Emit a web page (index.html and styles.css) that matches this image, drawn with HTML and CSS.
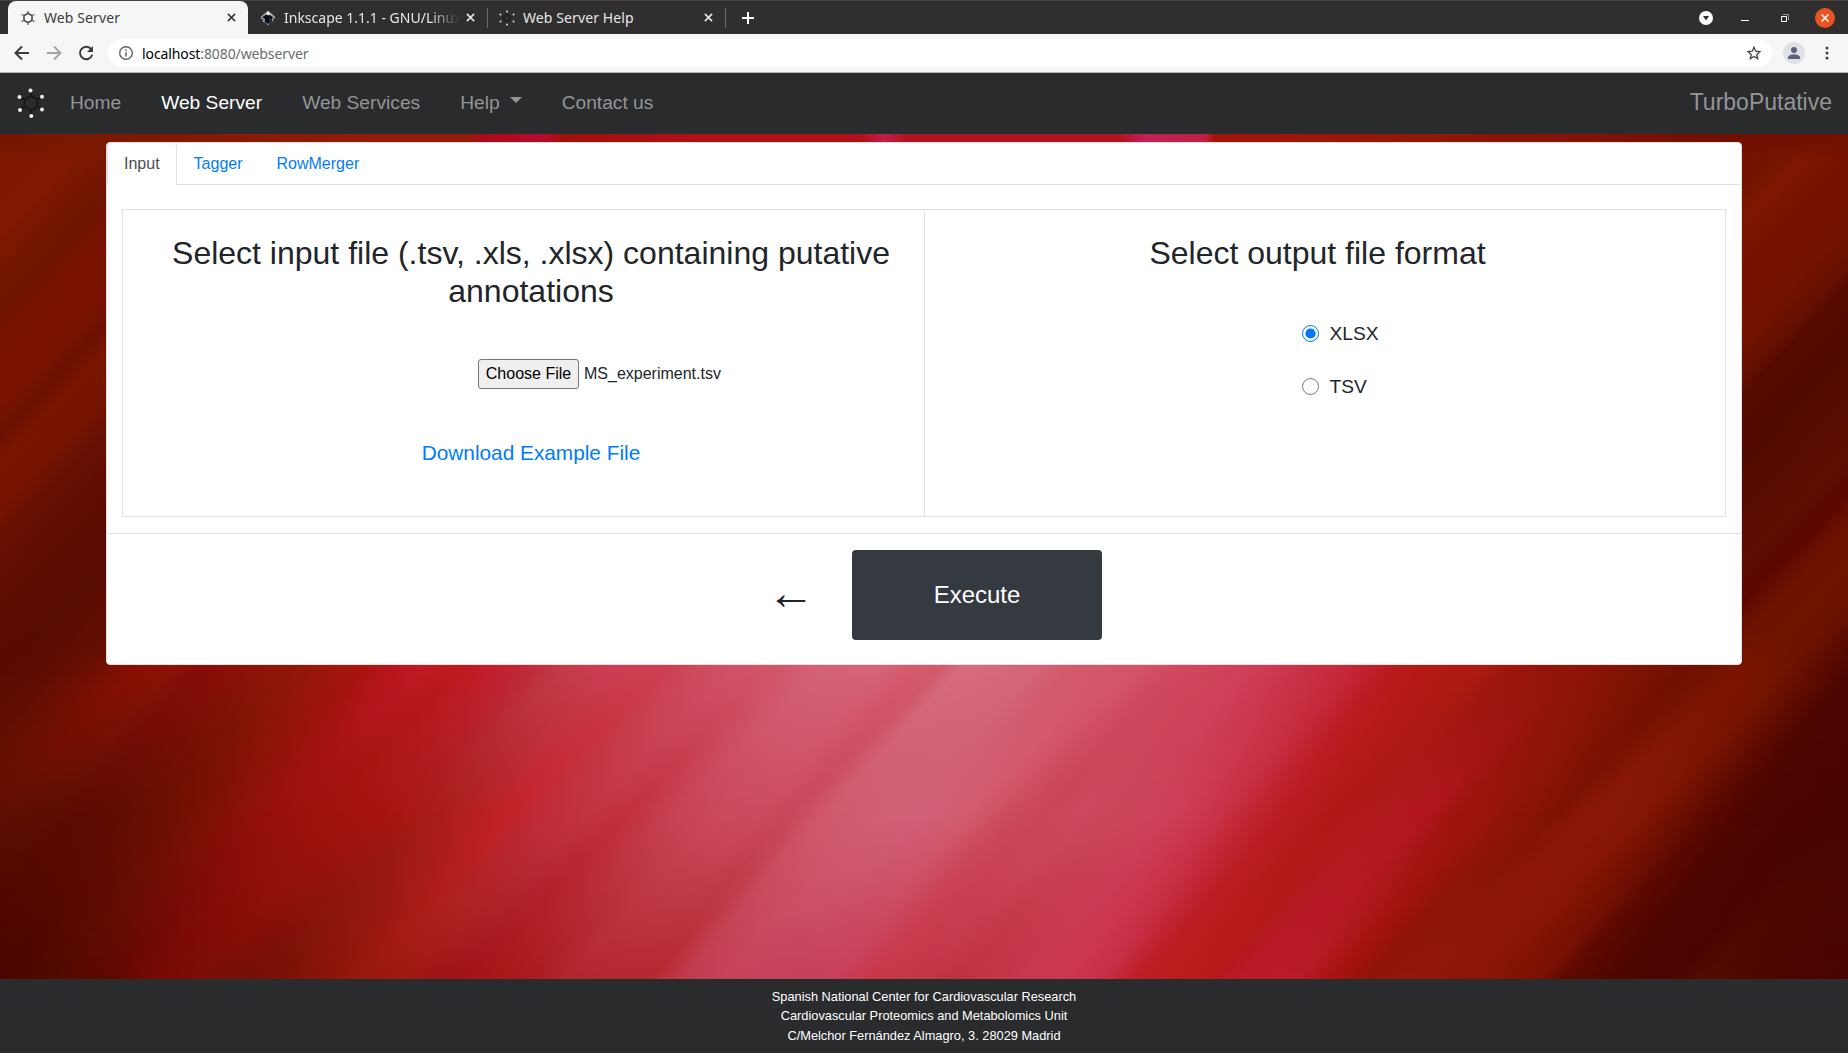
FILE: index.html
```html
<!DOCTYPE html>
<html lang="en">
<head>
<meta charset="utf-8">
<title>Web Server</title>
<link rel="stylesheet" href="styles.css">
</head>
<body>
<svg class="defs" width="0" height="0" aria-hidden="true">
  <symbol id="close" viewBox="0 0 10 10"><path d="M1 1l8 8M9 1l-8 8" fill="none" stroke="currentColor" stroke-width="1.8"/></symbol>
</svg>

<header class="tabstrip">
  <div class="tab tab-active">
    <svg class="favicon" viewBox="0 0 16 16"><path d="M8 3.3l4 2.3v4.8l-4 2.3-4-2.3V5.600z" fill="none" stroke="#3c3c3c" stroke-width="1.5"/><path d="M8 1v2.500M8 12.500V15M1.500 4.300l2.500 1.400M12 10.300l2.500 1.400M14.500 4.300L12 5.700M4 10.300l-2.500 1.400" stroke="#666" stroke-width="1.300"/></svg>
    <span class="tab-title">Web Server</span>
    <svg class="tab-close"><use href="#close"/></svg>
  </div>
  <div class="tab">
    <svg class="favicon" viewBox="0 0 16 16"><path d="M8 .5l7 6.300c1 1.200-.7 2-2.400 2.600l.9 1.600-3.300 1.500L8 15.500l-2-2.700-3.500-1 1.200-2C1.500 9.200.2 8 1 6.800z" fill="#a9adb4"/><path d="M8 4l5.500 3.500-2 1.500.8 2L8 14l-3.500-2.500.5-2.500-3-1.500L6 4.500z" fill="#0c0e18"/><path d="M8 1.500l2.300 2.300L8 5.500 6 4z" fill="#eee"/><path d="M9 8l2.500 2-2 1.500z" fill="#39466b"/></svg>
    <span class="tab-title tab-fade">Inkscape 1.1.1 - GNU/Linux</span>
    <svg class="tab-close"><use href="#close"/></svg>
  </div>
  <div class="tab tab-help">
    <svg class="favicon" viewBox="0 0 16 16"><path d="M8 4.500l3 1.800v3.500l-3 1.800-3-1.800V6.300z" fill="none" stroke="#181a1a" stroke-width="1.200"/><g fill="#ddd"><circle cx="8" cy="1.500" r="1"/><circle cx="8" cy="14.500" r="1"/><circle cx="1.500" cy="4.500" r="1"/><circle cx="14.500" cy="4.500" r="1"/><circle cx="1.500" cy="11.500" r="1"/><circle cx="14.500" cy="11.500" r="1"/></g></svg>
    <span class="tab-title">Web Server Help</span>
    <svg class="tab-close"><use href="#close"/></svg>
  </div>
  <svg class="new-tab" viewBox="0 0 12 12"><path d="M6 0v12M0 6h12" stroke="#fff" stroke-width="2"/></svg>
  <div class="window-controls">
    <svg width="14" height="14" viewBox="0 0 14 14"><circle cx="7" cy="7" r="7" fill="#fff"/><path d="M4 5h6L7 9.500z" fill="#302e2f"/></svg>
    <svg width="8" height="14" viewBox="0 0 8 14"><path d="M0 9.500h8" stroke="#fff"/></svg>
    <svg width="8" height="8" viewBox="0 0 8 8"><path d="M.5 2.500h5v5h-5z" fill="none" stroke="#fff"/><path d="M2 .5h5.500V6" fill="none" stroke="#999"/></svg>
    <svg width="20" height="20" viewBox="0 0 20 20"><circle cx="10" cy="10" r="10" fill="#e95420"/><path d="M6.500 6.500l7 7M13.500 6.500l-7 7" stroke="#fff" stroke-width="1.500"/></svg>
  </div>
</header>

<div class="toolbar">
  <svg class="tool" viewBox="0 0 16 16"><path d="M15 8H2M8 1.500L1.500 8 8 14.500" fill="none" stroke="#3b3b3b" stroke-width="2"/></svg>
  <svg class="tool" viewBox="0 0 16 16"><path d="M1 8h13M8 1.500L14.500 8 8 14.500" fill="none" stroke="#a3a3a3" stroke-width="1.800"/></svg>
  <svg class="tool" viewBox="0 0 16 16"><path d="M13.200 4.200A6.200 6.200 0 1 0 14.200 9.800" fill="none" stroke="#3b3b3b" stroke-width="2"/><path d="M15 1v6H9z" fill="#3b3b3b"/></svg>
  <div class="omnibox">
    <svg width="14" height="14" viewBox="0 0 14 14"><circle cx="7" cy="7" r="6.300" fill="none" stroke="#5f6368" stroke-width="1.400"/><path d="M7 6.200v4.300M7 3.500v1.500" stroke="#5f6368" stroke-width="1.500"/></svg>
    <span class="url"><b>localhost</b>:8080/webserver</span>
    <svg class="star" width="14" height="14" viewBox="0 0 14 14"><path d="M7 1.300l1.700 3.900 4.300.4-3.200 2.800.9 4.200L7 10.400l-3.700 2.200.9-4.200L1 5.600l4.300-.4z" fill="none" stroke="#444" stroke-width="1.300"/></svg>
  </div>
  <svg class="avatar" viewBox="0 0 22 22"><circle cx="11" cy="11" r="11" fill="#dee1e6"/><circle cx="11" cy="8" r="3" fill="#5a6478"/><path d="M5 17v-1.500c0-2.400 4-3.300 6-3.300s6 .9 6 3.300V17z" fill="#5a6478"/></svg>
  <svg class="kebab" viewBox="0 0 4 14"><g fill="#444"><circle cx="2" cy="2" r="1.500"/><circle cx="2" cy="7" r="1.500"/><circle cx="2" cy="12" r="1.500"/></g></svg>
</div>

<nav class="navbar">
  <svg class="brand-mark" viewBox="0 0 28 30"><path d="M14 8l6.500 3.500v7L14 22.500l-6.500-4v-7zM14 8V3M20.500 11.500l4-2.500M20.500 18.500l4 2.500M14 22.500V27M7.500 18.500L3 21M7.500 11.500L3 9" fill="none" stroke="#151616" stroke-width="1.600"/><g fill="#eee"><circle cx="13.500" cy="2.500" r="2"/><circle cx="2.500" cy="9" r="2"/><circle cx="25" cy="8.700" r="2"/><circle cx="3" cy="22" r="2"/><circle cx="25" cy="21.500" r="2"/><circle cx="14.300" cy="28" r="2"/></g></svg>
  <a>Home</a>
  <a class="current">Web Server</a>
  <a>Web Services</a>
  <a class="dropdown">Help</a>
  <a>Contact us</a>
  <span class="brand">TurboPutative</span>
</nav>

<main class="page">
  <div class="backdrop" aria-hidden="true">
    <div class="streaks streaks-mid"></div>
    <div class="streaks streaks-upper"></div>
    <div class="streaks streaks-lower"></div>
    <div class="edge edge-left"><div class="streaks streaks-left"></div></div>
    <div class="edge edge-right"><div class="streaks streaks-right"></div></div>
    <div class="top-glow"></div>
  </div>
  <section class="card">
    <div class="card-tabs">
      <a class="selected">Input</a>
      <a>Tagger</a>
      <a>RowMerger</a>
    </div>
    <div class="options">
      <div class="option">
        <h2>Select input file (.tsv, .xls, .xlsx) containing putative annotations</h2>
        <div class="file-row"><button class="choose">Choose File</button><span>MS_experiment.tsv</span></div>
        <a class="example">Download Example File</a>
      </div>
      <div class="option">
        <h2>Select output file format</h2>
        <div class="formats">
          <label><input type="radio" name="format" checked>XLSX</label>
          <label><input type="radio" name="format">TSV</label>
        </div>
      </div>
    </div>
    <div class="actions">
      <span class="back">←</span>
      <button class="execute">Execute</button>
    </div>
  </section>
</main>

<footer class="footer">
  <div>Spanish National Center for Cardiovascular Research</div>
  <div>Cardiovascular Proteomics and Metabolomics Unit</div>
  <div>C/Melchor Fernández Almagro, 3. 28029 Madrid</div>
</footer>
</body>
</html>
```
FILE: styles.css
```css
* { box-sizing: border-box; }

body {
  margin: 0;
  height: 1053px;
  overflow: hidden;
  display: flex;
  flex-direction: column;
  font-family: "Liberation Sans", Arial, sans-serif;
  font-size: 16px;
  line-height: 1.5;
  color: #212529;
}

svg { display: block; flex: none; }
.defs { position: absolute; }

/* Browser tabs */
.tabstrip {
  height: 34px;
  flex: none;
  display: flex;
  align-items: center;
  padding-left: 8px;
  background: #302e2f;
  border-top: 1px solid #454344;
  font-family: "Noto Sans", sans-serif;
  font-size: 14px;
  color: #e6e6e6;
}
.tab {
  width: 239px;
  height: 33px;
  display: flex;
  align-items: center;
  padding: 0 12px 0 12px;
}
.tab-active {
  width: 240px;
  background: #f6f6f6;
  color: #3c3c3c;
  border-radius: 8px 8px 0 0;
}
.favicon { width: 16px; height: 16px; margin-right: 8px; }
.tab-title { width: 176px; white-space: nowrap; overflow: hidden; letter-spacing: .1px; }
.tab-fade { letter-spacing: 0; mask-image: linear-gradient(90deg, #000 145px, transparent 176px); }
.tab-close { width: 9px; height: 9px; margin-left: 8px; }
.tab-help {
  border-right: 1px solid #6b696a;
  border-left: 1px solid #6b696a;
  height: 20px;
  padding-left: 11px;
}
.new-tab { width: 12px; height: 12px; margin-left: 16px; }
.window-controls {
  margin-left: auto;
  display: flex;
  align-items: center;
  padding-right: 13px;
}
.window-controls svg:nth-child(2) { margin-left: 28px; }
.window-controls svg:nth-child(3) { margin-left: 32px; }
.window-controls svg:nth-child(4) { margin-left: 26px; }

/* Address bar */
.toolbar {
  height: 39px;
  flex: none;
  display: flex;
  align-items: center;
  padding: 0 19px 0 14px;
  background: #f6f6f6;
  border-bottom: 1px solid #b4b4b4;
}
.tool { width: 16px; height: 16px; margin-right: 16px; }
.omnibox {
  flex: 1;
  height: 28px;
  margin: 0 11px 0 -2px;
  padding: 0 11px;
  display: flex;
  align-items: center;
  gap: 9px;
  border-radius: 14px;
  background: #fff;
  font-family: "Noto Sans", sans-serif;
  font-size: 14px;
  color: #6a6d70;
}
.url { letter-spacing: -.1px; }
.url b { font-weight: 400; color: #000; }
.star { margin-left: auto; }
.avatar { width: 22px; height: 22px; }
.kebab { width: 4px; height: 14px; margin-left: 20px; }

/* Site navigation */
.navbar {
  height: 61px;
  flex: none;
  display: flex;
  align-items: center;
  gap: 40px;
  padding: 0 16px;
  background: #2a2b2d;
  font-size: 19.2px;
  color: #949596;
}
.brand-mark { width: 28px; height: 30px; margin: 0 -15px 2px 1px; }
.current { color: #fff; }
.dropdown::after {
  content: "";
  display: inline-block;
  margin-left: 10px;
  vertical-align: 6px;
  border: 6px solid transparent;
  border-top-color: currentColor;
  border-bottom: 0;
}
.brand { margin-left: auto; padding-bottom: 2px; font-size: 23px; }

/* Page with diagonal light streaks behind the card */
.page {
  position: relative;
  height: 845px;
  flex: none;
  padding: 8px 106px;
  overflow: hidden;
}
.backdrop { position: absolute; inset: 0; background: #5a0b00; overflow: hidden; }
.streaks {
  position: absolute;
  top: 0;
  left: 0;
  width: 2300px;
  height: 845px;
  transform: skewX(-43.380deg);
  transform-origin: 0 531px;
}
.streaks-upper {
  mask-image: linear-gradient(#000 531px, transparent 681px);
  background: linear-gradient(90deg, #580b00 0, #600e00 59px, #741002 100px, #8a1004 141px, #8a1407 177px, #860e08 200px, #8c1008 236px, #8f1809 295px, #9d170c 330px, #aa1410 365px, #b5151a 389px, #bf1a25 424px, #bc1a1e 460px, #c3212f 500px, #c02c3c 536px, #c43c4c 566px, #cb4055 619px, #cc3f52 666px, #cd4a5c 695px, #d1526a 737px, #d1566a 778px, #d4647a 825px, #d5647a 884px, #d45a6c 919px, #d25a6c 942px, #d66c80 965px, #d46478 1042px, #d25a6a 1071px, #d4546a 1142px, #d14a62 1171px, #cf4459 1219px, #cf3e58 1254px, #c93248 1301px, #c32535 1360px, #b81a1e 1395px, #b51914 1425px, #ab1b10 1484px, #9c160e 1513px, #92150a 1549px, #8a1407 1590px, #7a1404 1649px, #701002 1684px, #701202 1708px, #7b1500 1749px, #701400 1790px, #5e0c00 1825px, #4a0500 1860px);
}
.streaks-mid {
  background: linear-gradient(90deg, #5e0f00 142px, #5c0e00 189px, #5c0b00 219px, #600d00 260px, #701002 319px, #841207 366px, #960f0c 407px, #a0130e 472px, #a81412 525px, #a81c18 572px, #b52022 613px, #c42228 649px, #c02c38 684px, #c23442 731px, #c22f3e 767px, #c84254 814px, #cb4a5c 861px, #cc4c5e 902px, #c8485a 932px, #d05a6c 967px, #d26074 1026px, #d2607a 1066px, #d35c6c 1113px, #cc4c5c 1148px, #cb4658 1184px, #ce4a5e 1219px, #cc465a 1266px, #ce4058 1313px, #c93248 1361px, #c0242f 1396px, #b81c20 1431px, #b01818 1479px, #b21a1e 1520px, #b3161e 1567px, #a01410 1596px, #981509 1632px, #8a1407 1667px, #801305 1697px, #8c1808 1732px, #841605 1785px, #6a0e00 1826px, #580900 1856px, #4e0500 1891px, #480400 1950px, #460500 1990px);
}
.streaks-lower {
  mask-image: linear-gradient(transparent 681px, #000 841px);
  background: linear-gradient(90deg, #4a0500 293px, #520a00 352px, #600800 405px, #720903 440px, #7a0d04 487px, #741005 540px, #7a1206 576px, #881409 617px, #9a190e 658px, #a01812 705px, #a01318 747px, #a81818 794px, #aa1c20 829px, #b2262e 859px, #b42832 906px, #b52830 947px, #c03a4c 977px, #c64258 1018px, #c5405a 1089px, #c8405a 1130px, #c8384a 1165px, #c23648 1214px, #c03240 1252px, #c83850 1323px, #cc3850 1358px, #c8304a 1394px, #be2028 1429px, #b81c18 1482px, #b5191a 1512px, #b81a28 1535px, #b81c26 1594px, #a81210 1629px, #901409 1665px, #92180a 1700px, #8a1505 1777px, #7a1204 1836px, #600a00 1859px, #4e0600 1912px, #4c0400 1965px, #540a00 2001px, #4c0600 2071px, #480400 2141px);
}
.edge {
  position: absolute;
  top: 0;
  width: 106px;
  height: 560px;
  overflow: hidden;
  mask-image: linear-gradient(#000 500px, transparent 545px);
}
.edge-left { left: 0; }
.edge-right { right: 0; }
.streaks-left {
  left: -600px;
  width: 1200px;
  background: linear-gradient(90deg, #7e1800 154px, #801900 192px, #6f1500 258px, #7a1200 315px, #7a1400 352px, #6c1000 385px, #7a1600 412px, #741300 456px, #661002 485px, #5e0d00 541px, #580b00 608px, #600e00 660px);
}
.streaks-right {
  left: -1742px;
  background: linear-gradient(90deg, #741400 1299px, #7e1800 1322px, #761200 1365px, #741200 1431px, #661000 1469px, #580a00 1488px, #520a00 1545px, #580c00 1595px, #5e0e00 1649px, #5a0700 1682px, #6e1200 1715px, #701400 1752px, #6c1200 1790px, #4e0600 1840px);
}
.top-glow {
  position: absolute;
  inset: 0 0 auto 0;
  height: 26px;
  mask-image: linear-gradient(#000 8px, transparent);
  background: linear-gradient(90deg, #741700 0, #7a1800 90px, #951c08 380px, #951c08 470px, #aa0a1a 482px, #b50c2c 545px, #a01008 562px, #b01018 700px, #b01018 860px, #c0204a 885px, #b01420 905px, #b01420 1120px, #c22058 1145px, #c02040 1205px, #a51408 1215px, #941806 1400px, #801204 1600px, #700e00 1740px, #701200 1848px);
}

/* Card */
.card {
  position: relative;
  height: 523px;
  background: #fff;
  border: 1px solid #dfdfdf;
  border-radius: 4px;
}
.card-tabs {
  display: flex;
  height: 42px;
  border-bottom: 1px solid #dee2e6;
  color: #007bff;
}
.card-tabs a { padding: 9px 17px 7px; }
.card-tabs .selected {
  height: 42px;
  padding: 9px 16px 7px;
  color: #495057;
  background: #fff;
  border: 1px solid #dee2e6;
  border-top: 0;
  border-bottom: 0;
  border-radius: 4px 4px 0 0;
}
.options {
  display: grid;
  grid-template-columns: 802px 1fr;
  height: 308px;
  margin: 24px 15px 16px;
  border: 1px solid #dee2e6;
}
.option {
  display: flex;
  flex-direction: column;
  align-items: center;
  padding: 24px 17px 0 32px;
}
.option + .option { padding: 24px 32px 0 17px; }
.option:first-child { border-right: 1px solid #dee2e6; }
h2 {
  margin: 0;
  font-size: 32px;
  font-weight: 400;
  line-height: 38.400px;
  text-align: center;
}
.file-row {
  display: flex;
  align-items: center;
  gap: 5px;
  width: 160px;
  margin: 48px 0 0 54px;
  white-space: nowrap;
}
.choose {
  flex: none;
  width: 101px;
  height: 30px;
  padding: 0;
  font: inherit;
  line-height: 24px;
  color: #000;
  background: #efefef;
  border: 1px solid #767676;
  border-radius: 3px;
}
.example { margin-top: 48px; font-size: 20.800px; color: #007bff; }
.formats { width: 80px; margin: 35px 0 0 48px; font-size: 19.200px; }
.formats label {
  display: flex;
  align-items: center;
  gap: 11px;
  height: 53px;
}
.formats input { width: 17px; height: 17px; margin: 0; flex: none; accent-color: #0075ff; }
.actions {
  display: flex;
  border-top: 1px solid #dee2e6;
  padding: 16px 0 0 660px;
}
.back { width: 85px; margin-top: 15px; font-size: 48px; line-height: 56px; }
.execute {
  width: 250px;
  height: 90px;
  font: inherit;
  font-size: 24px;
  color: #fff;
  background: #343a40;
  border: 0;
  border-radius: 4px;
}

/* Footer */
.footer {
  flex: 1;
  padding-top: 8px;
  background: #2a2b2d;
  color: #fff;
  font-size: 12.800px;
  line-height: 19.400px;
  text-align: center;
}
```
